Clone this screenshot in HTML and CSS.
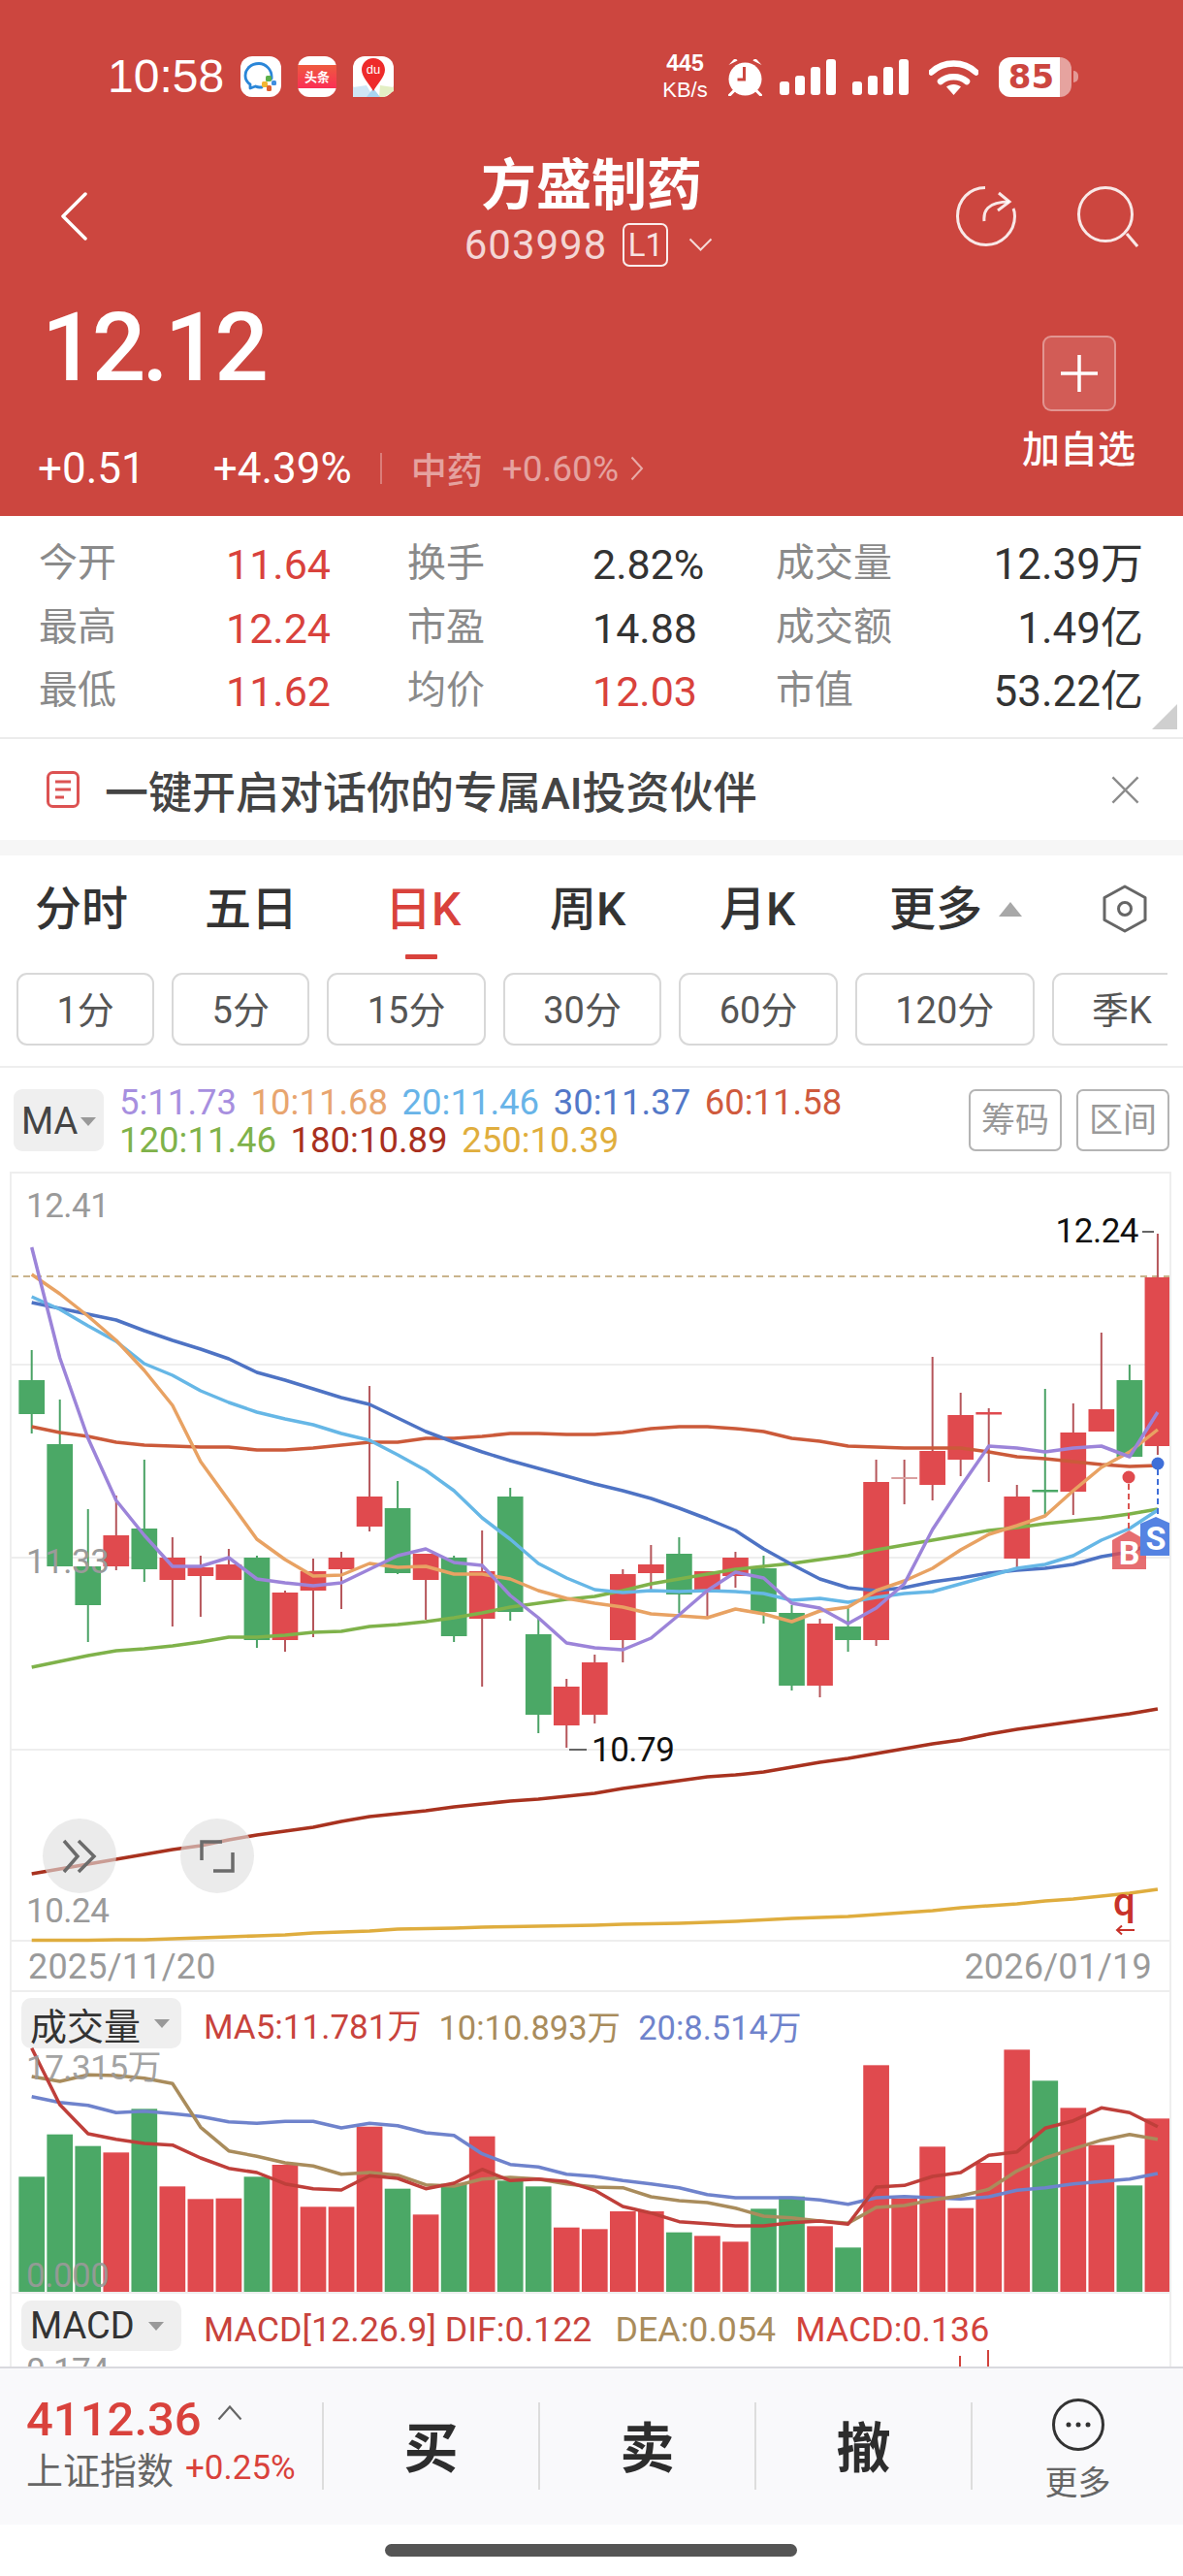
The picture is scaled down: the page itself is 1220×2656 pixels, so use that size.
FILE: index.html
```html
<!DOCTYPE html>
<html lang="zh-CN">
<head>
<meta charset="utf-8">
<title>方盛制药</title>
<link rel="stylesheet" href="styles.css">
</head>
<body>
<div class="page">
  <header class="hero">
    <div class="status">
      <div class="status-group">
        <span class="clock">10:58</span>
        <svg class="app" viewBox="0 0 42 42"><rect width="42" height="42" rx="12" fill="#fff"/><path d="M32 23C33 14 26 7.500 19 7.500C11 7.500 5 13 5 20C5 24 7 27 10 29L10 33L15.500 31C17 32 19 32 22 32" fill="none" stroke="#2a86d8" stroke-width="2.800" stroke-linecap="round" stroke-linejoin="round"/><rect x="26" y="20" width="6" height="6" rx="1.500" fill="#5db04a"/><rect x="32" y="25" width="5" height="5" rx="1.500" fill="#3f8fe0"/><rect x="22" y="26" width="6" height="6" rx="1.500" fill="#f2b632"/><rect x="27" y="30" width="5" height="6" rx="1.500" fill="#e0602f"/></svg>
        <svg class="app app-narrow" viewBox="0 0 40 42"><rect width="40" height="42" rx="12" fill="#fff"/><defs><linearGradient id="tt" x1="0" y1="0" x2="0" y2="1"><stop offset="0" stop-color="#ee5a3f"/><stop offset="1" stop-color="#fb2f55"/></linearGradient></defs><rect y="9" width="40" height="24" fill="url(#tt)"/><text x="20" y="26" class="tt-text" text-anchor="middle">头条</text></svg>
        <svg class="app" viewBox="0 0 42 42"><rect width="42" height="42" rx="12" fill="#fff"/><path d="M0 32L14 30L21 42L0 42Z" fill="#cfe6f5"/><path d="M28 30L42 32L42 36L32 42L27 42Z" fill="#e3efc4"/><path d="M14 42L21 33L28 42Z" fill="#a9d6f2"/><path d="M21 2C13.500 2 9 8 9 14C9 21 17 29 21 36C25 29 33 21 33 14C33 8 28.500 2 21 2Z" fill="#ee2b2b"/><text x="21" y="18" class="du-text" text-anchor="middle">du</text></svg>
      </div>
      <div class="status-group status-right">
        <div class="speed"><b>445</b><span>KB/s</span></div>
        <svg class="alarm" viewBox="0 0 37 40"><circle cx="18.500" cy="22.500" r="17" fill="#fff"/><path d="M1.500 8L6.500 2.500C7.500 1.800 10 2 10.500 3.500Z" fill="#fff"/><path d="M35.500 8L30.500 2.500C29.500 1.800 27 2 26.500 3.500Z" fill="#fff"/><path d="M2.500 39L7 34.500M34.500 39L30 34.500" stroke="#fff" stroke-width="3" stroke-linecap="round"/><path d="M17.500 10V23H10.500" fill="none" stroke="#cc463f" stroke-width="3"/></svg>
        <div class="signal"><i class="bar b1"></i><i class="bar b2"></i><i class="bar b3"></i><i class="bar b4"></i></div>
        <div class="signal"><i class="bar b1"></i><i class="bar b2"></i><i class="bar b3"></i><i class="bar b4"></i></div>
        <svg class="wifi" viewBox="0 0 51 37"><path d="M2.500 13.500C15 1.500 36 1.500 48.500 13.500" fill="none" stroke="#fff" stroke-width="6.500" stroke-linecap="round"/><path d="M12 23C19 16.500 32 16.500 39 23" fill="none" stroke="#fff" stroke-width="6.500" stroke-linecap="round"/><path d="M18 28.500C22 25 29 25 33 28.500L25.500 37Z" fill="#fff"/></svg>
        <div class="battery"><div class="battery-body"><span class="battery-fill">85</span><span class="battery-rest"></span></div><i class="battery-nub"></i></div>
      </div>
    </div>

    <div class="nav">
      <div class="nav-left">
        <svg class="back" viewBox="0 0 28 50"><path d="M26 2L3 25L26 48" fill="none" stroke="#fff" stroke-width="3.500" stroke-linecap="round" stroke-linejoin="round"/></svg>
      </div>
      <div class="nav-title">
        <h1 class="stock-name">方盛制药</h1>
        <div class="stock-code">
          <span class="code">603998</span>
          <span class="level">L1</span>
          <svg class="code-arrow" viewBox="0 0 25 14"><path d="M1.500 1.500L12.500 12.500L23.500 1.500" fill="none" stroke="#fff" stroke-opacity=".8" stroke-width="2"/></svg>
        </div>
      </div>
      <div class="nav-right">
        <svg class="refresh" viewBox="0 0 62 62"><path d="M30 1.500C14 1.500 1.500 14 1.500 31C1.500 47 14 60.500 31 60.500C47 60.500 60.500 47 60.500 31C60.500 28 60 25 59 23" fill="none" stroke="#fff" stroke-opacity=".88" stroke-width="3"/><path d="M29 36C28 26 32 16 55 16" fill="none" stroke="#fff" stroke-opacity=".88" stroke-width="3"/><path d="M44 7L55 16L43 25" fill="none" stroke="#fff" stroke-opacity=".88" stroke-width="3"/></svg>
        <svg class="search" viewBox="0 0 64 64"><circle cx="30" cy="30" r="27.500" fill="none" stroke="#fff" stroke-opacity=".88" stroke-width="3"/><path d="M52 50L63 63" fill="none" stroke="#fff" stroke-opacity=".88" stroke-width="3"/></svg>
      </div>
    </div>

    <div class="quote">
      <div class="quote-main">
        <div class="price">12.12</div>
        <div class="change-row">
          <span class="change">+0.51</span>
          <span class="change change-pct">+4.39%</span>
          <i class="change-sep"></i>
          <span class="sector">中药</span>
          <span class="sector-pct">+0.60%</span>
          <svg class="sector-arrow" viewBox="0 0 14 26"><path d="M1.500 1.500L12 13L1.500 24.500" fill="none" stroke="#fff" stroke-opacity=".55" stroke-width="2"/></svg>
        </div>
      </div>
      <div class="watch">
        <div class="watch-btn"><svg class="watch-plus" viewBox="0 0 38 38"><path d="M19 0V38M0 19H38" stroke="#fff" stroke-width="3.500"/></svg></div>
        <div class="watch-label">加自选</div>
      </div>
    </div>
  </header>

  <section class="stats">
    <span class="st-label">今开</span><span class="st-val up st-c1">11.64</span><span class="st-label">换手</span><span class="st-val">2.82%</span><span class="st-label">成交量</span><span class="st-val st-end">12.39万</span>
    <span class="st-label">最高</span><span class="st-val up st-c1">12.24</span><span class="st-label">市盈</span><span class="st-val">14.88</span><span class="st-label">成交额</span><span class="st-val st-end">1.49亿</span>
    <span class="st-label">最低</span><span class="st-val up st-c1">11.62</span><span class="st-label">均价</span><span class="st-val up">12.03</span><span class="st-label">市值</span><span class="st-val st-end">53.22亿</span>
    <i class="corner"></i>
  </section>

  <section class="banner">
    <svg class="doc" viewBox="0 0 34 38"><rect x="1.500" y="1.500" width="31" height="35" rx="5" fill="none" stroke="#dc5252" stroke-width="3"/><path d="M9 11H25M9 19H25M9 27H18" stroke="#dc5252" stroke-width="3"/></svg>
    <span class="banner-text">一键开启对话你的专属AI投资伙伴</span>
    <svg class="banner-close" viewBox="0 0 30 30"><path d="M1.500 1.500L28.500 28.500M28.500 1.500L1.500 28.500" stroke="#8c8c8c" stroke-width="2.500"/></svg>
  </section>
  <div class="gap"></div>

  <nav class="tabs">
    <span class="tab">分时</span>
    <span class="tab">五日</span>
    <span class="tab tab-on">日K</span>
    <span class="tab">周K</span>
    <span class="tab">月K</span>
    <span class="tab tab-more">更多<i class="tri-up"></i></span>
    <svg class="hex" viewBox="0 0 46 50"><path d="M23 2L44 13.500V36.500L23 48L2 36.500V13.500Z" fill="none" stroke="#666" stroke-width="3" stroke-linejoin="round"/><circle cx="23" cy="25" r="6.500" fill="none" stroke="#666" stroke-width="3"/></svg>
  </nav>

  <div class="periods">
    <span class="period">1分</span><span class="period">5分</span><span class="period">15分</span><span class="period">30分</span><span class="period">60分</span><span class="period">120分</span><span class="period">季K</span>
  </div>

  <div class="ma-row">
    <div class="selector sel-ma">MA<i class="tri-down"></i></div>
    <div class="ma-legend">
      <div class="ma-line"><span class="c5">5:11.73</span><span class="c10">10:11.68</span><span class="c20">20:11.46</span><span class="c30">30:11.37</span><span class="c60">60:11.58</span></div>
      <div class="ma-line"><span class="c120">120:11.46</span><span class="c180">180:10.89</span><span class="c250">250:10.39</span></div>
    </div>
    <div class="ma-tools"><span class="tool">筹码</span><span class="tool">区间</span></div>
  </div>

  <main class="charts">
    <div class="price-chart">
      <svg class="price-svg" viewBox="12 1210 1194 844">
        <g id="kline"></g>
        <g class="marks">
          <path d="M1164 1530V1578" class="dash-red"/>
          <path d="M1194 1515V1564" class="dash-blue"/>
          <circle cx="1164" cy="1523" r="6.500" fill="#e04a4e"/>
          <circle cx="1194" cy="1509" r="6.500" fill="#3f6fd8"/>
          <path d="M1147 1588L1164.500 1578L1182 1588V1618H1147Z" fill="#e04a4e" fill-opacity=".8"/>
          <text x="1164.500" y="1613" class="tag-text" text-anchor="middle">B</text>
          <path d="M1176 1571L1192 1564L1208 1571V1604H1176Z" fill="#5583e2"/>
          <text x="1192" y="1598" class="tag-text" text-anchor="middle">S</text>
          <path d="M1170 1990H1152M1157 1985.500L1152 1990L1157 1994.500" fill="none" stroke="#c8322a" stroke-width="2"/>
          <path d="M1178 1270H1190M587 1804H605" stroke="#666" stroke-width="2"/>
        </g>
      </svg>
      <span class="axis ax-hi">12.41</span>
      <span class="axis ax-mid">11.33</span>
      <span class="axis ax-low">10.24</span>
      <span class="axis axis-date date-l">2025/11/20</span>
      <span class="axis axis-date date-r">2026/01/19</span>
      <span class="extreme ex-hi">12.24</span>
      <span class="extreme ex-lo">10.79</span>
      <span class="q-mark">q</span>
      <div class="round round-a"><svg viewBox="0 0 36 36"><path d="M2 2L16 18L2 34M17 2L33 18L17 34" fill="none" stroke="#6b6b6b" stroke-width="3.500"/></svg></div>
      <div class="round round-b"><svg viewBox="0 0 36 36"><path d="M2 22V3H23M34 14V33H14" fill="none" stroke="#6b6b6b" stroke-width="3.500"/></svg></div>
    </div>

    <div class="vol-panel">
      <div class="panel-head">
        <div class="selector sel-wide">成交量<i class="tri-down"></i></div>
        <div class="panel-legend"><span class="v5">MA5:11.781万</span><span class="v10">10:10.893万</span><span class="v20">20:8.514万</span></div>
      </div>
      <svg class="vol-svg" viewBox="12 2112 1194 253"><g id="volume"></g></svg>
      <span class="axis vol-hi">17.315万</span>
      <span class="axis vol-lo">0.000</span>
    </div>

    <div class="macd-panel">
      <div class="panel-head macd-head">
        <div class="selector sel-wide sel-en">MACD<i class="tri-down"></i></div>
        <div class="panel-legend legend-macd"><span class="v5">MACD[12.26.9] DIF:0.122</span><span class="v10">DEA:0.054</span><span class="vm">MACD:0.136</span></div>
      </div>
      <span class="axis macd-hi">0.174</span>
      <i class="stick s1"></i><i class="stick s2"></i>
    </div>
  </main>

  <footer class="foot">
    <div class="index">
      <div class="index-top"><span class="index-val">4112.36</span><svg class="index-arrow" viewBox="0 0 26 16"><path d="M1.500 14.500L13 1.500L24.500 14.500" fill="none" stroke="#666" stroke-width="2.200"/></svg></div>
      <div class="index-bot"><span class="index-name">上证指数</span><span class="index-pct">+0.25%</span></div>
    </div>
    <div class="act">买</div>
    <div class="act">卖</div>
    <div class="act">撤</div>
    <div class="act-more">
      <svg class="more-ico" viewBox="0 0 54 54"><circle cx="27" cy="27" r="25.500" fill="none" stroke="#333" stroke-width="3"/><circle cx="17" cy="27" r="2.500" fill="#333"/><circle cx="27" cy="27" r="2.500" fill="#333"/><circle cx="37" cy="27" r="2.500" fill="#333"/></svg>
      <span class="more-text">更多</span>
    </div>
  </footer>
  <div class="home"><i class="home-bar"></i></div>
</div>
<script src="chart.js"></script>
</body>
</html>
```
FILE: styles.css
```css
* { box-sizing: border-box; margin: 0; padding: 0; }
html, body { background: #fff; }
body { font-family: Roboto, "Noto Sans CJK SC", sans-serif; color: #333; }
i { display: block; font-style: normal; }
.page { width: 1220px; height: 2656px; overflow: hidden; position: relative; background: #fff; }

/* header */
.hero { height: 532px; background: #cc463f; color: #fff; padding-top: 58px; }
.status { height: 42px; display: flex; justify-content: space-between; align-items: center; padding: 0 108px 0 111px; }
.status-group { display: flex; align-items: center; gap: 17px; }
.clock { font: 400 48px/42px "Liberation Sans", sans-serif; margin-right: 0; }
.app { width: 42px; height: 42px; display: block; }
.app-narrow { width: 40px; }
.tt-text { font: 700 13px "Noto Sans CJK SC", sans-serif; fill: #fff; }
.du-text { font: 400 13px "Liberation Sans", sans-serif; fill: #fff; }
.status-right { gap: 0; }
.speed { width: 47px; display: flex; flex-direction: column; align-items: center; font-family: "Liberation Sans", sans-serif; color: #fff; }
.speed b { font-size: 23px; line-height: 27px; }
.speed span { font-size: 22px; line-height: 27px; }
.alarm { width: 37px; height: 40px; margin-left: 20px; }
.signal { width: 58px; height: 37px; margin-left: 17px; display: flex; align-items: flex-end; justify-content: space-between; }
.bar { width: 9.500px; background: #fff; border-radius: 3px; }
.b1 { height: 14px; }
.b2 { height: 20px; }
.b3 { height: 29px; }
.b4 { height: 37px; }
.wifi { width: 51px; height: 37px; margin-left: 21px; }
.battery { display: flex; align-items: center; margin-left: 21px; }
.battery-body { width: 75px; height: 41px; display: flex; border-radius: 12px; overflow: hidden; }
.battery-fill { width: 63px; background: #fff; color: #cc463f; text-align: center; font: 700 34px/41px "DejaVu Sans", sans-serif; padding-left: 4px; }
.battery-rest { flex: 1; background: rgba(255,255,255,.5); }
.battery-nub { width: 5px; height: 12px; margin-left: 2px; background: rgba(255,255,255,.45); border-radius: 0 6px 6px 0; }

.nav { height: 125px; margin-top: 60px; display: grid; grid-template-columns: 1fr auto 1fr; align-items: center; }
.nav-left { padding-left: 62px; }
.back { width: 28px; height: 50px; display: block; }
.nav-title { display: flex; flex-direction: column; align-items: center; }
.stock-name { font-size: 57px; line-height: 55px; font-weight: 700; padding-top: 4px; box-sizing: content-box; }
.stock-code { height: 66px; display: flex; align-items: center; position: relative; left: -3px; }
.code { font-size: 42px; letter-spacing: 1px; color: rgba(255,255,255,.78); }
.level { width: 47px; height: 45px; margin-left: 16px; border: 2px solid rgba(255,255,255,.9); border-radius: 7px; text-align: center; font-size: 33px; line-height: 41px; color: rgba(255,255,255,.85); }
.code-arrow { width: 25px; height: 14px; margin-left: 21px; }
.nav-right { display: flex; justify-content: flex-end; align-items: center; gap: 62px; padding-right: 46px; }
.refresh { width: 62px; height: 62px; }
.search { width: 64px; height: 64px; }

.quote { height: 247px; display: flex; justify-content: space-between; padding: 0 49px 0 39px; }
.price { font-size: 98px; line-height: 100px; font-weight: 500; margin: 24px 0 0 4px; letter-spacing: -4px; }
.change-row { height: 44px; margin-top: 52px; display: flex; align-items: center; }
.change { font-size: 44px; }
.change-pct { margin-left: 70px; }
.change-sep { width: 2px; height: 32px; margin-left: 29px; background: rgba(255,255,255,.3); }
.sector { font-size: 37px; margin-left: 30px; color: rgba(255,255,255,.5); font-weight: 500; }
.sector-pct { font-size: 37px; margin-left: 20px; color: rgba(255,255,255,.5); }
.sector-arrow { width: 14px; height: 26px; margin-left: 12px; }
.watch { width: 117px; display: flex; flex-direction: column; align-items: center; padding-top: 61px; }
.watch-btn { width: 76px; height: 78px; border-radius: 9px; border: 2px solid rgba(255,255,255,.35); background: rgba(255,255,255,.12); display: flex; align-items: center; justify-content: center; }
.watch-plus { width: 38px; height: 38px; }
.watch-label { font-size: 39px; line-height: 50px; margin-top: 15px; white-space: nowrap; font-weight: 500; }

/* stats */
.stats { height: 230px; padding: 16px 41px 0 40px; border-bottom: 2px solid #ececec; display: grid; grid-template-columns: 193px 187px 191px 189px 160px 219px; grid-auto-rows: 65.700px; align-items: center; position: relative; }
.st-label { font-size: 40px; line-height: 56px; color: #8a8a8a; }
.st-val { font-size: 43px; line-height: 56px; padding-top: 2px; color: #333; }
.up { color: #d9423c; }
.st-end { text-align: right; white-space: nowrap; font-size: 44px; }
.corner { position: absolute; right: 6px; bottom: 8px; width: 0; height: 0; border-left: 26px solid transparent; border-bottom: 26px solid #cfcfcf; }

.banner { height: 104px; display: flex; align-items: center; padding: 0 45px 0 48px; }
.doc { width: 34px; height: 38px; }
.banner-text { font-size: 45px; margin-left: 26px; color: #444; font-weight: 500; flex: 1; }
.banner-close { width: 29px; height: 29px; }
.gap { height: 16px; background: #f6f6f6; }

/* tabs */
.tabs { height: 121px; padding-left: 36px; display: grid; grid-template-columns: 175px 186px 170px 175px 175px 220px 45px; align-items: center; }
.tab { font-size: 48px; line-height: 60px; color: #333; font-weight: 500; position: relative; white-space: nowrap; display: flex; align-items: center; top: -5px; }
.tab-on { color: #d9423c; }
.tab-on::after { content: ""; position: absolute; left: 21px; top: 76px; width: 33px; height: 5px; background: #d9423c; border-radius: 1px; }
.tri-up { width: 0; height: 0; margin-left: 17px; border-left: 12px solid transparent; border-right: 12px solid transparent; border-bottom: 15px solid #a8a8a8; }
.hex { width: 46px; height: 50px; position: relative; top: -6px; }

.periods { height: 75px; width: 1204px; overflow: hidden; display: flex; gap: 18px; padding-left: 17px; }
.period { flex: none; height: 75px; padding: 0 39.400px; border: 2px solid #d8d8d8; border-radius: 11px; font-size: 38px; line-height: 75px; color: #555; }

.ma-row { height: 109px; margin-top: 21px; border-top: 2px solid #eee; display: flex; align-items: center; padding: 0 14px; }
.selector { background: #efefef; border-radius: 9px; display: flex; align-items: center; color: #333; }
.sel-ma { width: 93px; height: 64px; font-size: 38px; padding: 3px 0 0 8px; color: #444; }
.tri-down { width: 0; height: 0; margin-left: 3px; border-left: 8px solid transparent; border-right: 8px solid transparent; border-top: 9px solid #999; }
.ma-legend { margin-left: 16px; padding-top: 2px; flex: 1; }
.ma-line { display: flex; gap: 14.500px; font-size: 36.500px; line-height: 39px; }
.c5 { color: #a78fdf; }
.c10 { color: #e8a56f; }
.c20 { color: #68b4e8; }
.c30 { color: #5378c8; }
.c60 { color: #cf5a3d; }
.c120 { color: #7fb24a; }
.c180 { color: #a9301e; }
.c250 { color: #e0ae3d; }
.ma-tools { display: flex; gap: 15px; }
.tool { width: 96px; height: 64px; border: 2px solid #b4b4b4; border-radius: 7px; text-align: center; font-size: 35px; line-height: 62px; color: #999; }

/* charts */
.charts { height: 1232px; margin-left: 10px; margin-right: 12px; border-left: 2px solid #eee; border-right: 2px solid #eee; overflow: hidden; }
.price-chart { position: relative; border-top: 2px solid #eee; height: 846px; }
.price-svg { display: block; width: 1194px; height: 844px; overflow: visible; }
.grid-line { stroke: #eee; stroke-width: 2; }
.dash-line { stroke: #c9b48c; stroke-width: 2; stroke-dasharray: 7 5; }
.wick-up { stroke: #b5555a; stroke-width: 2; }
.wick-down { stroke: #4aa265; stroke-width: 2; }
.wick-pale { stroke: #b5555a; stroke-width: 2; }
.body-up { fill: #e04a4e; }
.body-down { fill: #4ba866; }
.body-pale { fill: #d9a0a0; }
.curve { fill: none; stroke-width: 3.500; stroke-linejoin: round; }
.l5 { stroke: #9c84d9; }
.l10 { stroke: #e8a263; }
.l20 { stroke: #66b7e6; }
.l30 { stroke: #4e73c4; }
.l60 { stroke: #cb5a3a; }
.l120 { stroke: #7fb24a; }
.l180 { stroke: #a8321f; }
.l250 { stroke: #dfad3e; }
.lv5 { stroke: #bf3f3a; }
.lv10 { stroke: #a98c5c; }
.lv20 { stroke: #6f83cc; }
.dash-red { stroke: #d9534f; stroke-width: 2; stroke-dasharray: 6 4; fill: none; }
.dash-blue { stroke: #3f6fd8; stroke-width: 2; stroke-dasharray: 6 4; fill: none; }
.tag-text { font: 700 34px Roboto, sans-serif; fill: #fff; }
.axis { position: absolute; font-size: 35px; line-height: 40px; color: #9a9a9a; letter-spacing: -.5px; white-space: nowrap; }
.axis-date { font-size: 36px; letter-spacing: .2px; }
.ax-hi { left: 15px; top: 14px; }
.ax-mid { left: 15px; top: 381px; }
.ax-low { left: 15px; top: 741px; }
.date-l { left: 17px; top: 798px; }
.date-r { right: 18px; top: 798px; }
.extreme { position: absolute; font-size: 35px; line-height: 40px; color: #111; letter-spacing: -.5px; }
.ex-hi { right: 32px; top: 40px; }
.ex-lo { left: 598px; top: 575px; }
.q-mark { position: absolute; left: 1136px; top: 732px; font-size: 40px; line-height: 40px; color: #c8322a; font-weight: 500; }
.round { position: absolute; top: 665px; width: 76px; height: 77px; border-radius: 50%; background: rgba(222,222,222,.62); display: flex; align-items: center; justify-content: center; }
.round svg { width: 36px; height: 36px; }
.round-a { left: 32px; }
.round-b { left: 174px; }

.vol-panel { position: relative; height: 311px; }
.panel-head { height: 58px; padding: 6px 0 0 10px; display: flex; align-items: flex-start; }
.sel-wide { width: 165px; height: 52px; font-size: 38px; padding-left: 9px; border-radius: 10px; flex: none; }
.sel-wide .tri-down { margin-left: 14px; }
.panel-legend { margin-left: 23px; display: flex; gap: 18px; font-size: 35px; line-height: 62px; white-space: nowrap; }
.panel-legend .v10, .panel-legend .v20 { font-size: 34.500px; }
.legend-macd { font-size: 35.800px; line-height: 60px; gap: 20px; }
.legend-macd .v10 { font-size: 35.800px; margin-left: 4px; }
.v5 { color: #c8433c; }
.v10 { color: #a98c5c; }
.v20 { color: #6f83cc; }
.vm { color: #d2433c; }
.vol-svg { display: block; width: 1194px; height: 253px; overflow: visible; }
.vol-hi { left: 15px; top: 59px; opacity: .9; }
.vol-lo { left: 15px; top: 273px; opacity: .9; }

.macd-panel { position: relative; height: 75px; overflow: hidden; }
.macd-head { padding-top: 7px; height: 60px; }
.macd-hi { left: 15px; top: 60px; }
.stick { position: absolute; width: 2px; background: #d2433c; bottom: 0; }
.s1 { left: 977px; height: 11px; }
.s2 { left: 1006px; height: 17px; }

/* footer */
.foot { height: 163px; border-top: 2px solid #d9d9de; background: #f9f9fb; display: flex; padding-top: 35px; }
.index { width: 332px; padding-left: 27px; margin-top: -8px; }
.index-top { display: flex; align-items: center; height: 50px; }
.index-val { font-size: 49px; font-weight: 500; color: #d9423c; }
.index-arrow { width: 26px; height: 16px; margin: -12px 0 0 16px; }
.index-bot { display: flex; align-items: center; height: 50px; }
.index-name { font-size: 38px; color: #666; }
.index-pct { font-size: 35px; color: #d9423c; margin-left: 12px; }
.act { width: 223px; height: 90px; border-left: 2px solid #ddd; text-align: center; font-size: 56px; line-height: 96px; font-weight: 700; color: #2d2d2d; }
.act-more { width: 219px; height: 90px; border-left: 2px solid #ddd; display: flex; flex-direction: column; align-items: center; }
.more-ico { width: 54px; height: 54px; flex: none; margin-top: -4px; }
.more-text { font-size: 34px; line-height: 50px; margin-top: 8px; color: #666; }
.home { height: 53px; padding-top: 20px; }
.home-bar { width: 425px; height: 13px; margin-left: 397px; background: #555; border-radius: 7px; }
```
FILE: chart.js
```js
(function () {
  var NS = 'http://www.w3.org/2000/svg';
  var X0 = 32.7, STEP = 29.03, W = 26.7;
  function xOf(i) { return X0 + STEP * i; }
  function el(parent, name, cls, attrs) {
    var n = document.createElementNS(NS, name);
    if (cls) n.setAttribute('class', cls);
    for (var k in attrs) n.setAttribute(k, attrs[k]);
    parent.appendChild(n);
    return n;
  }
  // [kind, wickTop, bodyTop, bodyBottom, wickBottom]
  var K = [
    ['d',1392,1423,1458,1478],['d',1443,1489,1615,1615],['d',1556,1615,1655,1693],['u',1542,1583,1615,1619],
    ['d',1505,1576,1618,1631],['u',1585,1606,1629,1677],['u',1604,1616,1625,1667],['u',1597,1613,1629,1629],
    ['d',1604,1606,1691,1699],['u',1640,1642,1691,1703],['u',1607,1620,1640,1688],['u',1600,1606,1618,1659],
    ['u',1429,1543,1574,1579],['d',1527,1555,1622,1623],['u',1602,1602,1629,1670],['d',1604,1606,1687,1693],
    ['u',1578,1620,1669,1739],['d',1534,1543,1662,1671],['d',1669,1685,1768,1787],['u',1731,1739,1779,1802],
    ['u',1706,1714,1768,1777],['u',1618,1623,1691,1714],['u',1593,1613,1622,1642],['d',1585,1602,1644,1663],
    ['u',1620,1620,1640,1668],['u',1600,1606,1625,1637],['d',1604,1617,1662,1674],['d',1655,1663,1738,1743],
    ['u',1669,1674,1738,1750],['d',1658,1677,1691,1703],['u',1505,1528,1691,1697],['p',1505,1523,1525,1551],
    ['u',1399,1496,1531,1547],['u',1436,1459,1505,1522],['u',1452,1456,1458.5,1528],['u',1531,1543,1607,1617],
    ['d',1432,1536,1538.5,1563],['u',1447,1477,1538,1562],['u',1374,1453,1476,1476],['d',1407,1423,1502,1502],
    ['u',1272,1317,1491,1500]
  ];
  var LINES = {
    l5: [1286,1400,1483,1547,1583,1615,1615,1606,1628,1632,1635,1632,1618,1604,1597,1611,1614,1645,1668,1694,1699,1701,1689,1665,1640,1621,1627,1653,1658,1674,1658,1633,1577,1533,1491,1493,1497,1493,1491,1502,1456],
    l10: [1314,1334,1357,1382,1413,1449,1507,1547,1587,1608,1625,1624,1612,1616,1615,1623,1623,1628,1640,1648,1653,1657,1664,1666,1668,1659,1664,1672,1661,1657,1640,1630,1617,1598,1582,1573,1563,1537,1513,1497,1474],
    l20: [1337,1350,1367,1383,1406,1418,1434,1446,1456,1463,1469,1478,1485,1500,1516,1537,1565,1587,1612,1627,1639,1642,1640,1641,1640,1641,1643,1650,1648,1652,1647,1643,1641,1633,1625,1617,1613,1604,1588,1576,1557],
    l30: [1343,1349,1355,1361,1372,1382,1391,1401,1415,1423,1432,1441,1448,1462,1476,1487,1497,1506,1514,1522,1530,1537,1545,1555,1566,1578,1597,1613,1628,1637,1640,1637,1631,1627,1622,1619,1617,1613,1605,1600,1590],
    l60: [1471,1477,1481,1487,1490,1491,1492,1492,1495,1495,1493,1490,1487,1487,1483,1483,1481,1478,1478,1479,1479,1477,1473,1471,1471,1473,1476,1483,1486,1491,1492,1493,1493,1493,1497,1502,1504,1507,1510,1512,1511],
    l120: [1719,1713,1707,1702,1700,1697,1693,1688,1688,1686,1683,1682,1677,1675,1672,1668,1663,1657,1653,1649,1646,1640,1633,1628,1623,1618,1615,1612,1608,1604,1598,1593,1588,1583,1578,1575,1571,1568,1565,1561,1556],
    l180: [1932,1927,1922,1917,1912,1907,1903,1897,1892,1888,1884,1878,1873,1870,1867,1863,1860,1857,1855,1852,1849,1844,1840,1836,1832,1830,1827,1822,1817,1813,1808,1803,1798,1794,1788,1783,1779,1775,1771,1767,1762],
    l250: [2000.5,2000.5,2000.5,2000,2000,1999,1998,1997,1996,1995,1993,1992,1991,1989,1988.5,1988,1987,1986.5,1986,1985.5,1985,1984,1983.5,1983,1982,1981,1979.5,1978,1977,1976,1974,1972,1970,1967,1965,1963,1960,1958,1955,1952,1948]
  };
  var VOL = [
    ['d',553],['d',422],['d',458],['u',478],['d',343],['u',583],['u',622],['u',620],['d',553],['u',516],['u',646],
    ['u',646],['u',398],['d',590],['u',670],['d',575],['u',428],['d',565],['d',583],['u',710],['u',715],['u',660],
    ['u',660],['d',725],['u',736],['u',754],['d',652],['d',614],['u',706],['d',772],['u',208],['u',620],['u',460],
    ['u',650],['u',510],['u',160],['d',256],['u',340],['u',455],['d',580],['u',373]
  ];
  var VLINES = {
    lv20: [305,323,332,355,350,358,367,383,388,382,382,402,388,395,417,425,482,515,523,545,552,565,575,587,608,618,618,618,625,638,618,614,618,622,615,595,587,575,568,560,543],
    lv10: [243,258,238,240,248,265,400,473,490,510,520,545,540,548,578,582,560,555,560,575,585,587,615,627,633,650,675,680,690,697,648,642,625,612,592,535,495,467,440,422,437],
    lv5: [155,330,420,437,450,455,495,527,540,575,590,594,550,558,590,573,530,565,560,568,595,645,665,692,698,705,705,695,690,700,585,580,552,540,487,476,403,380,340,355,398]
  };
  function vy(p) { return 2060 + p / 3; }
  function pts(arr, f) {
    return arr.map(function (y, i) { return xOf(i).toFixed(1) + ',' + (f ? f(y) : y).toFixed(1); }).join(' ');
  }

  var kg = document.getElementById('kline');
  [1407, 1606, 1804, 2001, 2053].forEach(function (y) {
    el(kg, 'line', 'grid-line', { x1: 12, x2: 1206, y1: y, y2: y });
  });
  el(kg, 'line', 'dash-line', { x1: 12, x2: 1206, y1: 1316, y2: 1316 });
  var names = { u: 'up', d: 'down', p: 'pale' };
  K.forEach(function (c, i) {
    var x = xOf(i), n = names[c[0]];
    el(kg, 'line', 'wick-' + n, { x1: x, x2: x, y1: c[1], y2: c[4] });
    el(kg, 'rect', 'body-' + n, { x: x - W / 2, y: c[2], width: W, height: c[3] - c[2] });
  });
  ['l250', 'l180', 'l120', 'l60', 'l30', 'l20', 'l10', 'l5'].forEach(function (k) {
    el(kg, 'polyline', 'curve ' + k, { points: pts(LINES[k]) });
  });

  var vg = document.getElementById('volume');
  VOL.forEach(function (b, i) {
    var top = vy(b[1]);
    el(vg, 'rect', 'body-' + names[b[0]], { x: xOf(i) - W / 2, y: top, width: W, height: 2363 - top });
  });
  el(vg, 'line', 'grid-line', { x1: 12, x2: 1206, y1: 2364, y2: 2364 });
  ['lv20', 'lv10', 'lv5'].forEach(function (k) {
    el(vg, 'polyline', 'curve ' + k, { points: pts(VLINES[k], vy) });
  });
})();
```
